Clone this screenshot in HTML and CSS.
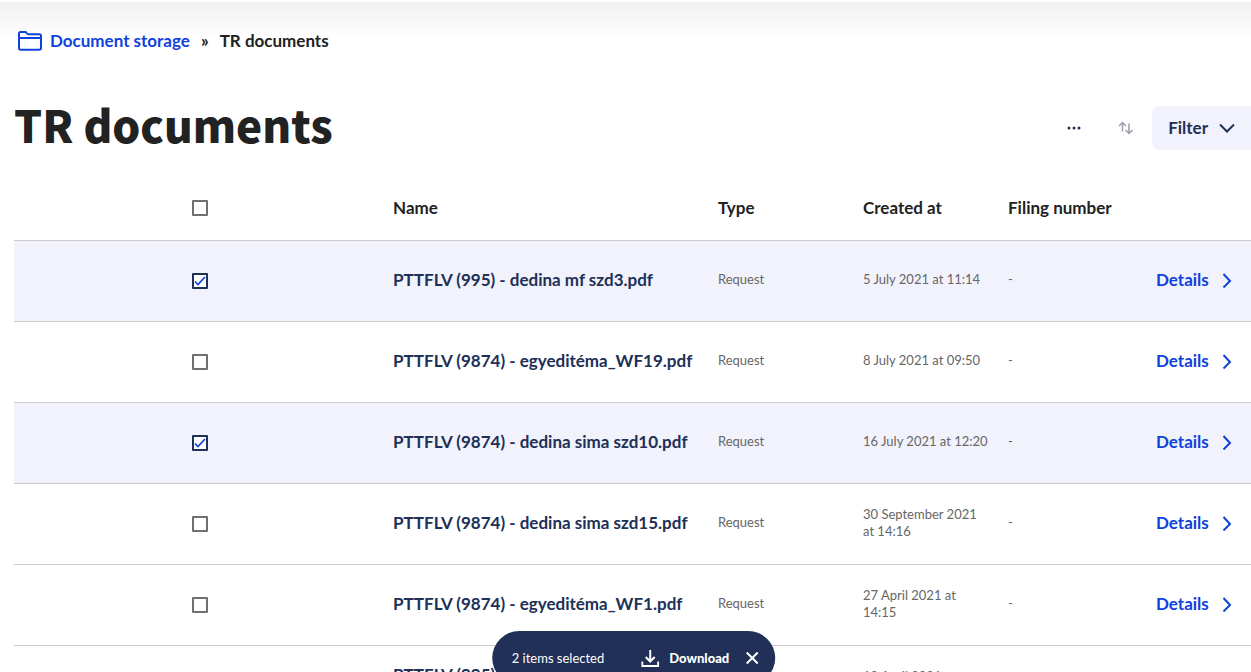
FILE: index.html
```
<!DOCTYPE html>
<html lang="en">
<head>
    <meta charset="UTF-8">
    <meta name="viewport" content="width=device-width, initial-scale=1.0">
    <title>TR documents</title>
    <link rel="stylesheet" href="styles.css">
</head>
<body>

<svg class="symbols" aria-hidden="true">
    <symbol id="chevron" viewBox="0 0 10 16">
        <path d="M1.500 2 8 9l-6.500 6.500"/>
    </symbol>
</svg>

<main class="page">
    <nav class="breadcrumb" aria-label="Breadcrumb">
        <a class="breadcrumb-link" href="#">
            <svg class="folder" viewBox="0 0 24 20">
                <path d="M1 17V2.500Q1 1 2.500 1H7q1 0 1.500.8l.5.700q.500.700 1.500.700h10.500q2 0 2 1.800v12q0 1.800-1.800 1.800H2.800Q1 18.800 1 17zM1 7h22"/>
            </svg>
            Document storage
        </a>
        <span class="separator">»</span>
        <span>TR documents</span>
    </nav>

    <header class="heading">
        <h1>TR documents</h1>
        <div class="tools">
            <button class="icon-button" aria-label="More">
                <svg width="14" height="4" viewBox="0 0 14 4">
                    <circle cx="2" cy="2" r="1.500"/><circle cx="7" cy="2" r="1.500"/><circle cx="12" cy="2" r="1.500"/>
                </svg>
            </button>
            <button class="icon-button sort" aria-label="Sort">
                <svg width="16" height="14" viewBox="0 0 16 14">
                    <path d="M4.500 10.500V2M1 5l3.500-3.500L8 5M11 2.500V12M7.500 9l3.500 3.500L14.500 9"/>
                </svg>
            </button>
            <button class="filter">
                Filter
                <svg width="16" height="10" viewBox="0 0 16 10"><path d="M1 1.500l7 7 7-7"/></svg>
            </button>
        </div>
    </header>

    <table class="documents">
        <colgroup>
            <col class="col-check">
            <col>
            <col class="col-type">
            <col class="col-created">
            <col class="col-filing">
            <col class="col-action">
        </colgroup>
        <thead>
            <tr>
                <th class="check"><input type="checkbox" aria-label="Select all"></th>
                <th>Name</th>
                <th>Type</th>
                <th>Created at</th>
                <th>Filing number</th>
                <th></th>
            </tr>
        </thead>
        <tbody>
            <tr class="selected">
                <td class="check"><input type="checkbox" aria-labelledby="doc1" checked></td>
                <td class="name" id="doc1">PTTFLV (995) - dedina mf szd3.pdf</td>
                <td>Request</td>
                <td>5 July 2021 at 11:14</td>
                <td>-</td>
                <td><a class="details" href="#">Details <svg class="arrow"><use href="#chevron"/></svg></a></td>
            </tr>
            <tr>
                <td class="check"><input type="checkbox" aria-labelledby="doc2"></td>
                <td class="name" id="doc2">PTTFLV (9874) - egyeditéma_WF19.pdf</td>
                <td>Request</td>
                <td>8 July 2021 at 09:50</td>
                <td>-</td>
                <td><a class="details" href="#">Details <svg class="arrow"><use href="#chevron"/></svg></a></td>
            </tr>
            <tr class="selected">
                <td class="check"><input type="checkbox" aria-labelledby="doc3" checked></td>
                <td class="name" id="doc3">PTTFLV (9874) - dedina sima szd10.pdf</td>
                <td>Request</td>
                <td>16 July 2021 at 12:20</td>
                <td>-</td>
                <td><a class="details" href="#">Details <svg class="arrow"><use href="#chevron"/></svg></a></td>
            </tr>
            <tr>
                <td class="check"><input type="checkbox" aria-labelledby="doc4"></td>
                <td class="name" id="doc4">PTTFLV (9874) - dedina sima szd15.pdf</td>
                <td>Request</td>
                <td>30 September 2021 at 14:16</td>
                <td>-</td>
                <td><a class="details" href="#">Details <svg class="arrow"><use href="#chevron"/></svg></a></td>
            </tr>
            <tr>
                <td class="check"><input type="checkbox" aria-labelledby="doc5"></td>
                <td class="name" id="doc5">PTTFLV (9874) - egyeditéma_WF1.pdf</td>
                <td>Request</td>
                <td>27 April 2021 at 14:15</td>
                <td>-</td>
                <td><a class="details" href="#">Details <svg class="arrow"><use href="#chevron"/></svg></a></td>
            </tr>
            <tr>
                <td class="check"><input type="checkbox" aria-labelledby="doc6"></td>
                <td class="name" id="doc6">PTTFLV (995) - dedina sima egyeditéma.pdf</td>
                <td>Request</td>
                <td>19 April 2021 at 14:15</td>
                <td>-</td>
                <td><a class="details" href="#">Details <svg class="arrow"><use href="#chevron"/></svg></a></td>
            </tr>
        </tbody>
    </table>
</main>

<div class="selection-bar">
    <span>2 items selected</span>
    <button class="download">
        <svg width="18" height="18" viewBox="0 0 18 18"><path d="M9 1v11M4.500 8 9 12.500 13.500 8M1 12.500V17h16v-4.500"/></svg>
        Download
    </button>
    <button class="close" aria-label="Clear selection">
        <svg width="14" height="14" viewBox="0 0 14 14"><path d="M1.500 1.500l11 11M12.500 1.500l-11 11"/></svg>
    </button>
</div>

</body>
</html>
```
FILE: styles.css
```
* {
    box-sizing: border-box;
}

body {
    font-family: Lato, "Liberation Sans", sans-serif;
    margin: 0;
    height: 100vh;
    overflow: hidden;
    border-top: 2px solid #fff;
    background: linear-gradient(#f0f0f0, #fff 40px) no-repeat #fff;
    color: #222;
}

svg {
    fill: none;
    stroke: currentColor;
    stroke-width: 2;
    flex: none;
}

.symbols {
    display: none;
}

.page {
    padding: 28px 0 0 14px;
}

.breadcrumb {
    display: flex;
    align-items: center;
    gap: 11px;
    padding-left: 4px;
    font-size: 17px;
    font-weight: bold;
    line-height: 22px;
}

.breadcrumb-link {
    display: flex;
    align-items: center;
    gap: 8px;
    color: #0f41dc;
    text-decoration: none;
}

.folder {
    width: 24px;
    height: 20px;
}

.heading {
    display: flex;
    justify-content: space-between;
    align-items: center;
    margin-top: 44px;
    height: 64px;
}

h1 {
    margin: 0;
    padding-bottom: 8px;
    font-family: "Noto Sans CJK SC", sans-serif;
    font-size: 44px;
    font-weight: 900;
    line-height: 56px;
}

button {
    border: none;
    background: none;
    padding: 0;
    font: inherit;
    color: inherit;
    cursor: pointer;
}

.tools {
    display: flex;
    align-items: center;
    color: #203057;
}

.icon-button {
    display: flex;
    justify-content: center;
    align-items: center;
    width: 52px;
    height: 44px;
}

.icon-button circle {
    fill: currentColor;
    stroke: none;
}

.sort {
    color: #9a9fae;
}

.sort path {
    stroke-width: 1.5;
}

.filter {
    display: flex;
    align-items: center;
    gap: 11px;
    height: 44px;
    padding: 0 16px;
    border-radius: 8px 0 0 8px;
    background-color: #f2f2fc;
    font-size: 17px;
    font-weight: bold;
    line-height: 20px;
}

.documents {
    width: 100%;
    margin-top: 16px;
    border-collapse: collapse;
    table-layout: fixed;
}

.col-check {
    width: 30%;
}

.col-type,
.col-created {
    width: 145px;
}

.col-filing {
    width: 148px;
}

.col-action {
    width: 103px;
}

th {
    height: 64px;
    padding: 0 8px;
    font-size: 17px;
    line-height: 20px;
    text-align: left;
    white-space: nowrap;
}

td {
    height: 81px;
    padding: 0 10px 2px 8px;
    border-top: 1px solid #ccc;
    font-size: 13px;
    line-height: 17px;
    color: #666;
}

.check {
    padding: 0 8px;
    text-align: center;
}

.name {
    font-size: 17px;
    font-weight: bold;
    line-height: 20px;
    color: #203057;
}

.selected {
    background-color: #f2f2fc;
}

input {
    appearance: none;
    display: block;
    width: 16px;
    height: 16px;
    margin: 0 auto;
    border: 2px solid #707070;
    border-radius: 1px;
    background-color: #fff;
}

input:checked {
    border-color: #203057;
    background: url('data:image/svg+xml,<svg xmlns="http://www.w3.org/2000/svg" viewBox="0 0 12 12"><path d="M1 6.500 4 9.500 11 2" fill="none" stroke="%230f41dc" stroke-width="1.700"/></svg>') center no-repeat #fff;
}

.details {
    display: flex;
    align-items: center;
    gap: 13px;
    font-size: 17px;
    font-weight: bold;
    color: #0f41dc;
    text-decoration: none;
}

.arrow {
    width: 10px;
    height: 16px;
}

.selection-bar {
    position: fixed;
    left: calc(50% + 8px);
    bottom: -13px;
    transform: translateX(-50%);
    display: flex;
    align-items: center;
    height: 54px;
    padding: 0 16px 0 20px;
    border-radius: 27px;
    background-color: #203057;
    font-size: 13px;
    color: #fff;
    white-space: nowrap;
}

.download {
    display: flex;
    align-items: center;
    gap: 10px;
    margin-left: 37px;
    font-weight: 900;
}

.close {
    display: flex;
    margin-left: 16px;
}
```
